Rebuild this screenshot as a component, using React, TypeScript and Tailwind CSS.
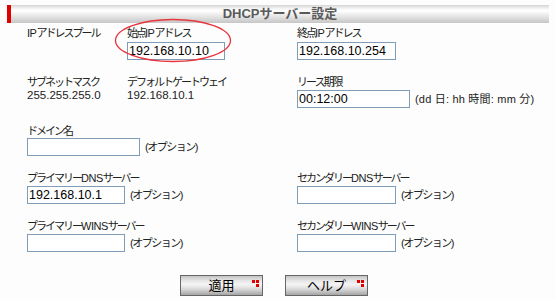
import React from "react";

const Label = ({ children, cls = "" }: { children: React.ReactNode; cls?: string }) => (
  <div className={"h-[14px] leading-[14px] text-[11px] tracking-[-2px] whitespace-nowrap text-[#222] " + cls}>{children}</div>
);

const L = ({ children }: { children: React.ReactNode }) => (
  <span className="tracking-[-0.5px]">{children}</span>
);

const Input = ({ value = "", w }: { value?: string; w: string }) => (
  <div
    className={
      "h-[18px] shrink-0 border border-[#7f9db9] bg-white pl-[1px] text-[12.5px] leading-[16px] text-black font-['Liberation_Sans',sans-serif] " +
      w
    }
  >
    {value}
  </div>
);

const Opt = () => (
  <span className="ml-[5px] text-[11px] tracking-[-1.5px] text-[#222] whitespace-nowrap">(オプション)</span>
);

const Value = ({ children }: { children: React.ReactNode }) => (
  <div className="-mt-[1px] h-[14px] leading-[14px] text-[11.5px] text-[#222] whitespace-nowrap">{children}</div>
);

const Dots = () => (
  <div className="absolute right-[3px] top-[4px] h-[7px] w-[7px]">
    <div className="absolute left-0 top-0 h-[3px] w-[3px] bg-[#e00000]" />
    <div className="absolute left-[4px] top-0 h-[3px] w-[3px] bg-[#e00000]" />
    <div className="absolute left-[4px] top-[4px] h-[3px] w-[3px] bg-[#e00000]" />
  </div>
);

const Btn = ({ label }: { label: string }) => (
  <div className="relative flex h-[21px] w-[83px] items-center justify-center border border-[#666] bg-[linear-gradient(to_bottom,#c4c4c4_0%,#e6e6e6_25%,#f4f4f4_45%,#d8d8d8_70%,#a4a4a4_100%)] text-[13px] text-black">
    {label}
    <Dots />
  </div>
);

export default function App() {
  return (
    <div className="relative h-[301px] w-[555px] overflow-hidden bg-[#fcfdfc] font-['Liberation_Sans','Noto_Sans_CJK_JP',sans-serif]">
      <div className="ml-[7px] mr-[6px] mt-[5px] flex h-[18px] items-center justify-center border-l-4 border-[#e00000] bg-[linear-gradient(to_bottom,#d4d4d4_0%,#f2f2f2_18%,#ffffff_32%,#ececec_55%,#c6c6c6_100%)]">
        <span className="text-[13px] font-bold leading-[18px] text-[#5a5a5a]">DHCPサーバー設定</span>
      </div>

      <div className="flex flex-col pl-[27px]">
        {/* Row 1 */}
        <div className="mt-[3px] grid grid-cols-[100px_170px_1fr]">
          <Label><L>IP</L>アドレスプール</Label>
          <div>
            <Label>始点<L>IP</L>アドレス</Label>
            <div className="mt-[2px]">
              <Input value="192.168.10.10" w="w-[98px]" />
            </div>
          </div>
          <div>
            <Label>終点<L>IP</L>アドレス</Label>
            <div className="mt-[2px]">
              <Input value="192.168.10.254" w="w-[99px]" />
            </div>
          </div>
        </div>

        {/* Row 2 */}
        <div className="mt-[15px] grid grid-cols-[100px_170px_1fr]">
          <div>
            <Label>サブネットマスク</Label>
            <Value>255.255.255.0</Value>
          </div>
          <div>
            <Label>デフォルトゲートウェイ</Label>
            <Value>192.168.10.1</Value>
          </div>
          <div>
            <Label>リース期限</Label>
            <div className="mt-[1px] flex items-center">
              <Input value="00:12:00" w="w-[113px]" />
              <span className="ml-[5px] text-[11px] tracking-[0.2px] text-[#222] whitespace-nowrap">(dd 日: hh 時間: mm 分)</span>
            </div>
          </div>
        </div>

        {/* Row 3 */}
        <div className="mt-[16px]">
          <Label>ドメイン名</Label>
          <div className="flex items-center">
            <Input w="w-[113px]" />
            <Opt />
          </div>
        </div>

        {/* Row 4 */}
        <div className="mt-[15px] grid grid-cols-[270px_1fr]">
          <div>
            <Label>プライマリー<L>DNS</L>サーバー</Label>
            <div className="mt-[1px] flex items-center">
              <Input value="192.168.10.1" w="w-[98px]" />
              <Opt />
            </div>
          </div>
          <div>
            <Label>セカンダリー<L>DNS</L>サーバー</Label>
            <div className="mt-[1px] flex items-center">
              <Input w="w-[99px]" />
              <Opt />
            </div>
          </div>
        </div>

        {/* Row 5 */}
        <div className="mt-[15px] grid grid-cols-[270px_1fr]">
          <div>
            <Label>プライマリー<L>WINS</L>サーバー</Label>
            <div className="mt-[1px] flex items-center">
              <Input w="w-[98px]" />
              <Opt />
            </div>
          </div>
          <div>
            <Label>セカンダリー<L>WINS</L>サーバー</Label>
            <div className="mt-[1px] flex items-center">
              <Input w="w-[99px]" />
              <Opt />
            </div>
          </div>
        </div>
      </div>

      <div className="mt-[23px] flex gap-[22px] pl-[180px]">
        <Btn label="適用" />
        <Btn label="ヘルプ" />
      </div>

      <svg className="pointer-events-none absolute left-[113px] top-[18px]" width="120" height="46" viewBox="0 0 120 46">
        <ellipse cx="60" cy="22.5" rx="57.5" ry="21" fill="none" stroke="#e8343c" strokeWidth="1.3" />
      </svg>
    </div>
  );
}
